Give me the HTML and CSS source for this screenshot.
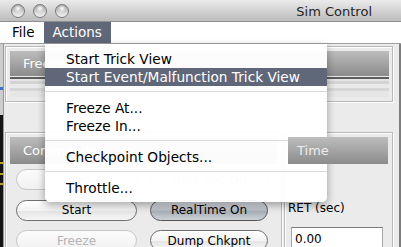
FILE: index.html
```html
<!DOCTYPE html>
<html lang="en">
<head>
    <meta charset="UTF-8">
    <title>Sim Control</title>
    <link rel="stylesheet" href="styles.css">
</head>
<body>
    <div class="window">
        <!-- title bar -->
        <div class="titlebar">
            <div class="lights"><span></span><span></span><span></span></div>
            <div class="title">Sim Control</div>
        </div>

        <!-- menu bar -->
        <div class="menubar">
            <span class="menu-title">File</span>
            <span class="menu-title open">Actions</span>
        </div>

        <div class="content">
            <div class="strip"></div>
            <div class="main">
                <div class="panel freeze-panel">
                    <div class="panel-head">Freeze</div>
                    <div class="rule"></div>
                    <div class="track"></div>
                </div>

                <div class="panel-row">
                    <div class="panel commands">
                        <div class="panel-head">Commands</div>
                        <div class="buttons">
                            <button disabled>Step</button>
                            <button disabled>Data Rec On</button>
                            <button>Start</button>
                            <button class="pressed">RealTime On</button>
                            <button disabled>Freeze</button>
                            <button>Dump Chkpnt</button>
                        </div>
                    </div>
                    <div class="panel time">
                        <div class="panel-head time-head">Time</div>
                        <label class="field-label" for="ret">RET (sec)</label>
                        <input id="ret" class="field" type="text" value="0.00" readonly>
                    </div>
                </div>
            </div>
        </div>

        <!-- open Actions menu -->
        <div class="dropdown">
            <div class="item">Start Trick View</div>
            <div class="item active">Start Event/Malfunction Trick View</div>
            <div class="sep"></div>
            <div class="item">Freeze At...</div>
            <div class="item">Freeze In...</div>
            <div class="sep"></div>
            <div class="item">Checkpoint Objects...</div>
            <div class="sep"></div>
            <div class="item">Throttle...</div>
        </div>
    </div>
</body>
</html>
```

FILE: styles.css
```css
* {
    box-sizing: border-box;
}
body {
    margin: 0;
    font-family: "DejaVu Sans", sans-serif;
    background: #111;
}
.window {
    position: relative;
    width: 401px;
    height: 247px;
    overflow: hidden;
    background: #ebebeb;
}

/* title bar */
.titlebar {
    height: 22px;
    display: flex;
    justify-content: space-between;
    padding: 4px 29px 0 11px;
    background: linear-gradient(#ebebeb, #bcbcbc);
    border-bottom: 1px solid #8f8f8f;
}
.lights {
    display: flex;
    gap: 8px;
}
.lights span {
    width: 14px;
    height: 14px;
    border-radius: 50%;
    border: 1px solid #7a7a7a;
    background: radial-gradient(circle at 50% 28%, #fdfdfd 0, rgba(255,255,255,0) 4px),
                linear-gradient(#9c9c9c, #d6d6d6 60%, #f2f2f2);
}
.title {
    font-size: 13px;
    line-height: 13px;
    padding-top: 1px;
    color: #262626;
}

/* menu bar */
.menubar {
    height: 22px;
    display: flex;
    padding-left: 3px;
    background: #fff;
    border-bottom: 1px solid #a1a1a1;
    font-size: 13.5px;
    line-height: 21px;
}
.menu-title {
    padding: 0 9px;
    color: #000;
}
.menu-title.open {
    background: #5f6779;
    color: #fff;
}

/* window content */
.content {
    display: flex;
    height: 203px;
}
.strip {
    width: 3px;
    background: linear-gradient(#cdcdcd 0 43px, #3d72c4 43px 46px, #cdcdcd 46px 71px,
        #141414 71px 118px, #b7a527 118px 120px, #141414 120px 129px,
        #b7a527 129px 131px, #141414 131px 139px, #b7a527 139px 141px, #141414 141px);
}
.main {
    flex: 1;
    padding: 2px 6px 0 1px;
    border-left: 1px solid #979797;
    border-right: 2px solid #7d7d7d;
}
.panel {
    border: 1px solid #b9b9b9;
    box-shadow: inset 1px 1px 0 #fff, 1px 1px 0 #fff;
}
.panel-head {
    background: linear-gradient(#bdbdbd, #8b8b8b);
    color: #fff;
    font-size: 13px;
    padding-left: 13px;
}
.freeze-panel {
    height: 56px;
    margin-bottom: 30px;
    padding: 4px 3px 0 4px;
}
.freeze-panel .panel-head {
    height: 25px;
    line-height: 25px;
}
.rule {
    height: 2px;
    margin-top: 1px;
    background: #5c5c5c;
}
.track {
    height: 18px;
    background: linear-gradient(#e4e4e4 0 2px, #d4d4d4 2px 5px, #e9e9e9 5px 9px,
        #d6d6d6 9px 12px, #e6e6e6 12px);
}

.panel-row {
    display: flex;
    gap: 2px;
    height: 130px;
}
.commands {
    width: 277px;
    padding: 4px 4px 0 4px;
}
.commands .panel-head,
.time .panel-head {
    height: 27px;
    line-height: 27px;
}
.buttons {
    display: grid;
    grid-template-columns: 121px 118px;
    gap: 9.5px 13px;
    margin-top: 5px;
    padding-left: 6px;
}
.buttons button {
    height: 21px;
    padding: 0;
    border-radius: 11px;
    border: 1px solid #6e6e6e;
    background: linear-gradient(#fefefe, #f3f3f3 50%, #e5e5e5 52%, #f6f6f6);
    font-family: inherit;
    font-size: 12px;
    color: #000;
}
.buttons button.pressed {
    border-color: #555;
    background: linear-gradient(#e3e5e9, #b9bec6 50%, #a6acb6 52%, #cdd1d7);
}
.buttons button:disabled {
    border-color: #c6c6c6;
    background: linear-gradient(#fbfbfb, #f1f1f1);
    color: #b4b4b4;
}

.time {
    flex: 1;
    padding: 4px 4px 0 3px;
}
.time-head {
    position: relative;
    z-index: 5;
    padding-left: 9px;
    color: #ececec;
}
.field-label {
    display: block;
    margin-top: 37px;
    font-size: 12px;
    line-height: 15px;
    color: #000;
}
.field {
    display: block;
    width: 92px;
    height: 24px;
    margin: 10.5px 0 0 3px;
    padding: 0 3px;
    border: 1px solid #a8a8a8;
    border-top-color: #7c7c7c;
    background: #fff;
    font-family: inherit;
    font-size: 12px;
    color: #000;
    outline: none;
}

/* dropdown menu */
.dropdown {
    position: absolute;
    z-index: 4;
    left: 45px;
    top: 44px;
    width: 282px;
    padding: 6px 0 5px;
    background: rgba(255, 255, 255, 0.96);
    border-radius: 0 0 5px 5px;
    box-shadow: 0 3px 8px rgba(0, 0, 0, 0.35);
    font-size: 13.7px;
}
.item {
    height: 18px;
    line-height: 18px;
    padding-left: 21px;
    color: #000;
    white-space: nowrap;
}
.item.active {
    background: #5f6779;
    color: #fff;
}
.sep {
    height: 1px;
    margin: 5px 0 7px;
    background: #d9d9d9;
}
```
